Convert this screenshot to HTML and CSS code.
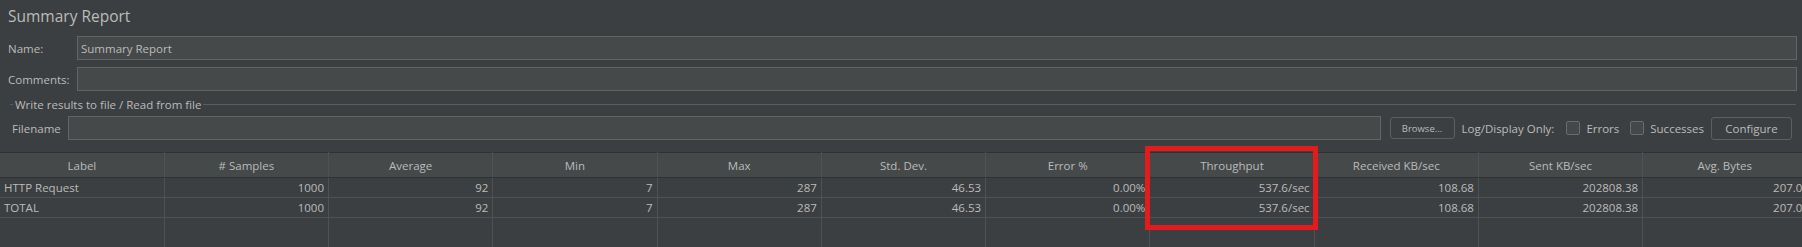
FILE: index.html
```html
<!DOCTYPE html>
<html>
<head>
<meta charset="utf-8">
<link rel="stylesheet" href="styles.css">
</head>
<body>
<div class="panel">
  <div class="title">Summary Report</div>
  <div class="form">
    <label class="lbl">Name:</label>
    <div class="input"><span>Summary Report</span></div>
    <label class="lbl">Comments:</label>
    <div class="input"></div>
  </div>
  <div class="group-title">
    <span class="dash"></span>
    <span class="gt-text">Write results to file / Read from file</span>
    <span class="line"></span>
  </div>
  <div class="file-row">
    <span class="lbl">Filename</span>
    <div class="input grow"></div>
    <button class="btn small">Browse...</button>
    <span class="lbl log">Log/Display Only:</span>
    <span class="check"><span class="box"></span>Errors</span>
    <span class="check last"><span class="box"></span>Successes</span>
    <button class="btn configure">Configure</button>
  </div>
  <div class="table-wrap">
    <div class="table-clip">
      <table class="grid">
        <thead>
          <tr>
            <th>Label</th><th># Samples</th><th>Average</th><th>Min</th><th>Max</th><th>Std. Dev.</th><th>Error %</th><th>Throughput</th><th>Received KB/sec</th><th>Sent KB/sec</th><th>Avg. Bytes</th>
          </tr>
        </thead>
        <tbody>
          <tr>
            <td class="l">HTTP Request</td><td>1000</td><td>92</td><td>7</td><td>287</td><td>46.53</td><td>0.00%</td><td>537.6/sec</td><td>108.68</td><td>202808.38</td><td>207.0</td>
          </tr>
          <tr>
            <td class="l">TOTAL</td><td>1000</td><td>92</td><td>7</td><td>287</td><td>46.53</td><td>0.00%</td><td>537.6/sec</td><td>108.68</td><td>202808.38</td><td>207.0</td>
          </tr>
          <tr class="empty">
            <td></td><td></td><td></td><td></td><td></td><td></td><td></td><td></td><td></td><td></td><td></td>
          </tr>
        </tbody>
      </table>
    </div>
    <div class="highlight"></div>
  </div>
</div>
</body>
</html>
```
FILE: styles.css
```css
* { box-sizing: border-box; }
html, body {
  margin: 0;
  padding: 0;
  background: #3c3f41;
  width: 1802px;
  height: 247px;
  overflow: hidden;
}
body {
  font-family: "Open Sans", "Noto Sans", sans-serif;
  font-size: 11.5px;
  color: #bbbbbb;
}
.panel {
  display: flex;
  flex-direction: column;
}
.title {
  font-size: 15.5px;
  padding: 6px 0 0 8px;
  height: 36px;
  line-height: 20px;
}
.form {
  display: grid;
  grid-template-columns: 69px 1fr;
  row-gap: 7px;
  padding: 0 5px 0 8px;
  align-items: center;
}
.lbl {
  white-space: nowrap;
}
.input {
  height: 24px;
  background: #45494a;
  border: 1px solid #646464;
  display: flex;
  align-items: center;
  padding-left: 3px;
}
.group-title {
  display: flex;
  align-items: center;
  height: 25px;
  padding: 2px 6px 0 10px;
}
.dash {
  width: 3px;
  height: 1px;
  background: #5a5d5f;
}
.gt-text {
  padding: 0 2px;
}
.line {
  flex: 1;
  height: 1px;
  background: #5a5d5f;
}
.file-row {
  display: flex;
  align-items: center;
  height: 24px;
  padding: 0 10px 0 12px;
}
.file-row .lbl { margin-right: 7px; }
.grow { flex: 1; }
.btn {
  font-family: inherit;
  color: #bbbbbb;
  background: #3c3f41;
  border: 1px solid #5e6060;
  border-radius: 3px;
  height: 23px;
  padding: 0;
  font-size: 11.5px;
}
.btn.small {
  width: 65px;
  font-size: 9.5px;
  height: 22px;
  margin-left: 9px;
  margin-right: 7px;
}
.btn.configure {
  width: 81px;
  margin-left: 7px;
}
.file-row .log { margin-right: 12px; }
.check {
  display: flex;
  align-items: center;
  gap: 6px;
  margin-right: 11px;
}
.check.last { margin-right: 0; }
.box {
  width: 14px;
  height: 14px;
  border: 1px solid #6b6b6b;
  border-radius: 2px;
  background: #43494a;
}
.table-wrap {
  position: relative;
  margin-top: 12px;
}
.table-clip {
  width: 1802px;
  overflow: hidden;
  height: 95px;
}
.grid {
  border-collapse: collapse;
  table-layout: fixed;
  width: 1807px;
}
.grid th, .grid td {
  width: 164.27px;
  border: 1px solid #4f5254;
  padding: 0 4px;
  white-space: nowrap;
  overflow: hidden;
}
.grid th {
  height: 25px;
  background: #45494a;
  font-weight: normal;
  text-align: center;
  border-top-color: #2f3133;
  border-bottom-color: #2f3133;
}
.grid td {
  height: 20px;
  text-align: right;
}
.grid td.l { text-align: left; }
.grid tr.empty td { height: 40px; border-bottom: none; }
.grid th:first-child, .grid td:first-child { border-left: none; }
.highlight {
  position: absolute;
  left: 1145px;
  top: -6px;
  width: 173px;
  height: 84px;
  border: 5px solid #e21c1c;
}
```
